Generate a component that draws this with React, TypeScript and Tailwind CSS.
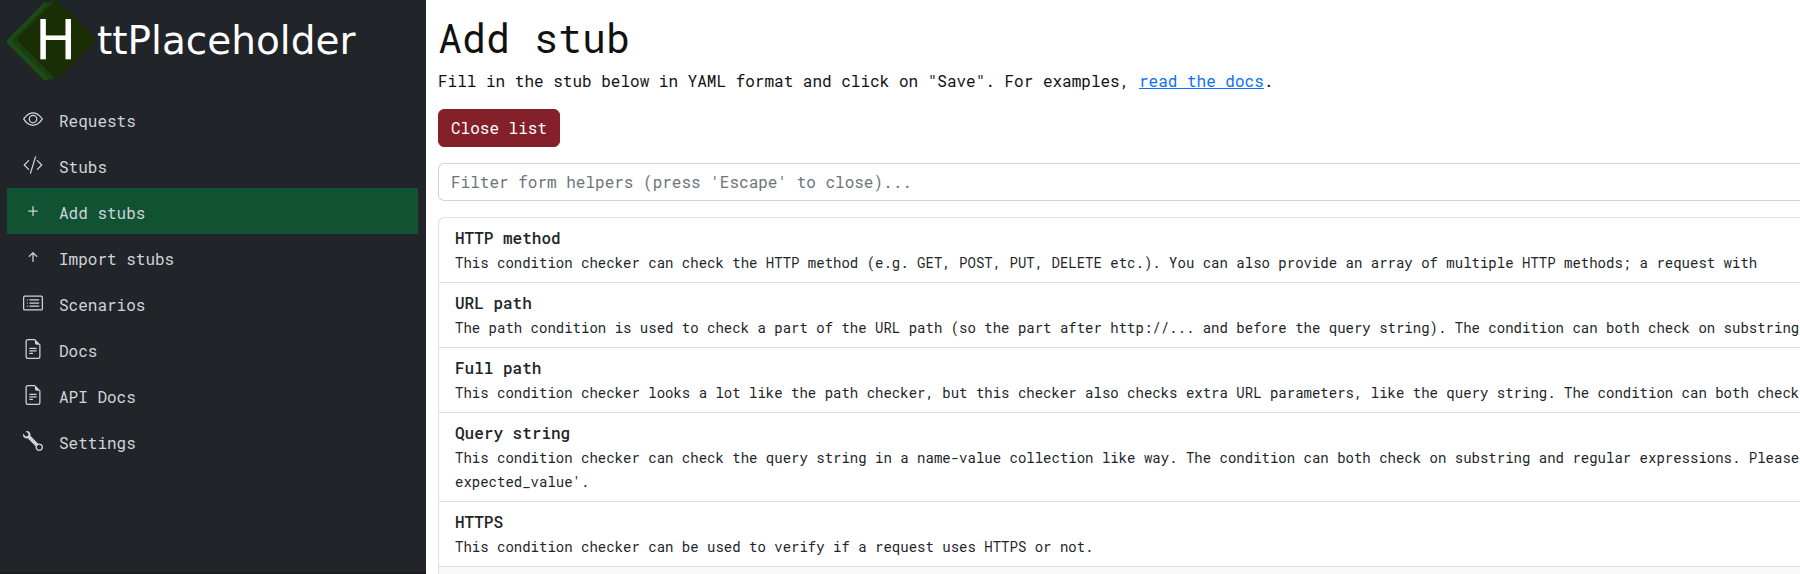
import React from "react";
import {
  BsEye,
  BsCodeSlash,
  BsPlus,
  BsArrowUpShort,
  BsCardList,
  BsFileEarmarkText,
  BsWrench,
} from "react-icons/bs";
import type { IconType } from "react-icons";

interface NavItem {
  label: string;
  icon: IconType;
  active?: boolean;
}

const navItems: NavItem[] = [
  { label: "Requests", icon: BsEye },
  { label: "Stubs", icon: BsCodeSlash },
  { label: "Add stubs", icon: BsPlus, active: true },
  { label: "Import stubs", icon: BsArrowUpShort },
  { label: "Scenarios", icon: BsCardList },
  { label: "Docs", icon: BsFileEarmarkText },
  { label: "API Docs", icon: BsFileEarmarkText },
  { label: "Settings", icon: BsWrench },
];

interface Helper {
  title: string;
  lines: string[];
}

const helpers: Helper[] = [
  {
    title: "HTTP method",
    lines: [
      "This condition checker can check the HTTP method (e.g. GET, POST, PUT, DELETE etc.). You can also provide an array of multiple HTTP methods; a request with",
    ],
  },
  {
    title: "URL path",
    lines: [
      "The path condition is used to check a part of the URL path (so the part after http://... and before the query string). The condition can both check on substring",
    ],
  },
  {
    title: "Full path",
    lines: [
      "This condition checker looks a lot like the path checker, but this checker also checks extra URL parameters, like the query string. The condition can both check",
    ],
  },
  {
    title: "Query string",
    lines: [
      "This condition checker can check the query string in a name-value collection like way. The condition can both check on substring and regular expressions. Please",
      "expected_value'.",
    ],
  },
  {
    title: "HTTPS",
    lines: ["This condition checker can be used to verify if a request uses HTTPS or not."],
  },
];

function Logo() {
  return (
    <svg viewBox="0 0 360 84" className="h-[84px] w-[360px]" role="img" aria-label="HttPlaceholder">
      <rect x="-28.5" y="-28.5" width="57" height="57" rx="4" transform="translate(45.7 41.5) rotate(45)" fill="#1b4d16" />
      <rect x="-28.5" y="-28.5" width="57" height="57" rx="4" transform="translate(51 40.5) rotate(45)" fill="#1b3f10" />
      <rect x="-28.5" y="-28.5" width="57" height="57" rx="4" transform="translate(56.4 39.3) rotate(45)" fill="#1a2e06" />
      <text x="35" y="59" fill="#ffffff" className="font-['DejaVu_Sans',sans-serif] text-[55px]">H</text>
      <text x="97" y="54" fill="#ffffff" className="font-['DejaVu_Sans',sans-serif] text-[39px]">ttPlaceholder</text>
    </svg>
  );
}

export default function App() {
  return (
    <div className="flex h-screen overflow-hidden bg-white font-['Roboto_Mono','DejaVu_Sans_Mono',monospace] text-base text-[#111111]">
      <aside className="flex w-[426px] shrink-0 flex-col border-b-2 border-[#1c1a1d] bg-[#212529]">
        <a href="#home" className="block">
          <Logo />
        </a>
        <nav className="mt-3 pl-[7px] pr-2">
          {navItems.map(({ label, icon: Icon, active }) => (
            <a
              key={label}
              href="#nav"
              aria-current={active ? "page" : undefined}
              className={
                active
                  ? "flex h-[46px] items-center gap-4 bg-[#115233] px-4 pt-1 text-[#ced4da]"
                  : "flex h-[46px] items-center gap-4 px-4 pt-1 text-[#ced4da]"
              }
            >
              <Icon className="mb-1 size-5" />
              <span>{label}</span>
            </a>
          ))}
        </nav>
      </aside>

      <main className="min-w-0 flex-1 overflow-hidden pl-3 pt-[14px]">
        <h1 className="text-[40px] leading-12">Add stub</h1>
        <p className="mt-[7px] leading-6">
          Fill in the stub below in YAML format and click on "Save". For examples,{" "}
          <a href="#docs" className="text-[#0d6efd] underline">
            read the docs
          </a>
          .
        </p>
        <button
          type="button"
          className="mt-4 block rounded-md border border-[#842029] bg-[#842029] px-3 py-[6px] leading-6 text-white"
        >
          Close list
        </button>
        <input
          type="text"
          aria-label="Filter form helpers"
          placeholder="Filter form helpers (press 'Escape' to close)..."
          className="mt-4 block w-full rounded-l-md border border-r-0 border-[#ced4da] px-3 py-[6px] leading-6 placeholder:text-[#6c757d]"
        />
        <ul className="mt-4 rounded-tl-md border-l border-t border-[#dfdfdf] text-[#212529]">
          {helpers.map(({ title, lines }) => (
            <li key={title} className="whitespace-nowrap border-b border-[#dfdfdf] px-4 pb-[7px] pt-2">
              <h2 className="mb-px leading-6 font-medium">{title}</h2>
              {lines.map((line) => (
                <p key={line} className="text-[14px] leading-6">
                  {line}
                </p>
              ))}
            </li>
          ))}
          <li className="h-16 bg-[#f8f9fa]" />
        </ul>
      </main>
    </div>
  );
}
